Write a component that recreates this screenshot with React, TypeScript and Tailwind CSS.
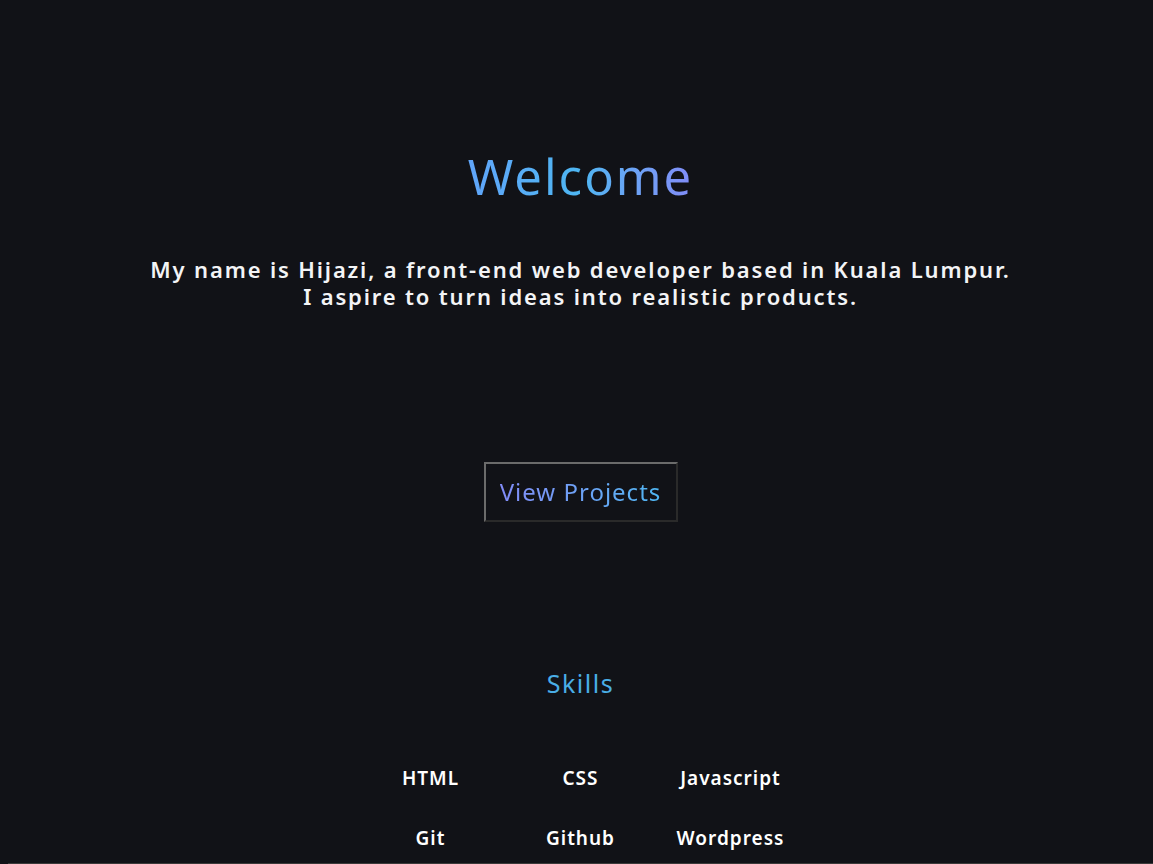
import React from 'react';

const skills = ['HTML', 'CSS', 'Javascript', 'Git', 'Github', 'Wordpress'];

const App = () => {
	return (
		<div className="min-h-screen bg-[#111217] text-white font-['Noto_Sans',sans-serif] pl-[8px]">
			<section className="flex flex-col items-center pt-[142px]">
				<h1 className="text-[49px] leading-[68px] tracking-[2px] bg-gradient-to-r from-[#60a5fa] via-[#4db6f2] to-[#818cf8] bg-clip-text text-transparent">
					Welcome
				</h1>
				<p className="mt-[46px] text-center text-[22px] leading-[27px] tracking-[1.85px] font-semibold text-[#f3f4f6]">
					My name is Hijazi, a front-end web developer based in Kuala Lumpur.
					<br />
					I aspire to turn ideas into realistic products.
				</p>
				<button className="mt-[152px] h-[60px] w-[194px] border-2 border-t-[#6b6b6b] border-l-[#6b6b6b] border-b-[#2a2a2a] border-r-[#2a2a2a] text-[24px] tracking-[1px]">
					<span className="bg-gradient-to-r from-[#818cf8] to-[#4db6f2] bg-clip-text text-transparent">
						View Projects
					</span>
				</button>
			</section>

			<section className="flex flex-col items-center pt-[145px]">
				<h2 className="text-[25px] leading-[32px] tracking-[1.5px] text-[#4aaee6]">Skills</h2>
				<div className="mt-[65px] grid grid-cols-3 w-[450px] gap-y-[32px]">
					{skills.map((s) => (
						<div key={s} className="text-center text-[19px] leading-[28px] tracking-[1px] font-semibold">
							{s}
						</div>
					))}
				</div>
			</section>
			<div className="mt-[11px] border-t border-[#3a3a3a] h-[40px]" />
		</div>
	);
};

export default App;
